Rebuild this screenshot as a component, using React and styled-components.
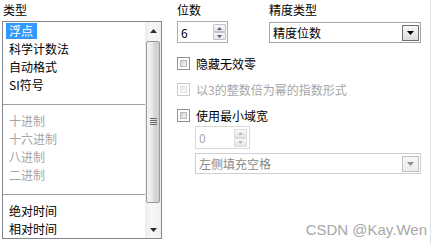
import React from 'react';
import styled, { createGlobalStyle } from 'styled-components';

const Global = createGlobalStyle`
  html, body { margin: 0; padding: 0; background: #fff; }
  body {
    font-family: "Noto Sans CJK SC", "Microsoft YaHei", sans-serif;
    font-size: 12px;
    color: #000;
  }
`;

const Page = styled.div`
  position: relative;
  width: 442px;
  height: 246px;
  display: flex;
  overflow: hidden;
  background: #fff;
`;

const LeftCol = styled.div`
  width: 160px;
  margin-left: 2px;
  display: flex;
  flex-direction: column;
`;

const Label = styled.div`
  height: 21px;
  box-sizing: border-box;
  padding-top: 3px;
  padding-left: ${p => p.$indent || 0}px;
  line-height: 14px;
  white-space: nowrap;
`;

const ListBox = styled.div`
  height: 218px;
  box-sizing: border-box;
  border: 1px solid #828790;
  display: flex;
`;

const List = styled.div`
  flex: 1;
  display: flex;
  flex-direction: column;
`;

const Row = styled.div`
  height: 18px;
  display: flex;
  align-items: center;
  padding-left: 3px;
`;

const Item = styled.span`
  line-height: 16px;
  height: 16px;
  padding: 0 4px 0 3px;
  white-space: nowrap;
  color: ${p => (p.$selected ? '#fff' : p.$disabled ? '#a6a6a6' : '#000')};
  background: ${p => (p.$selected ? '#3399ff' : 'transparent')};
`;

const SepRow = styled.div`
  height: 18px;
  box-sizing: border-box;
  padding-top: 3px;
  display: flex;
  align-items: center;
`;

const SepLine = styled.div`
  flex: 1;
  height: 1px;
  background: #a0a0a0;
`;

const ScrollBar = styled.div`
  width: 16px;
  display: flex;
  flex-direction: column;
  background: linear-gradient(to right, #ececec, #f7f7f7 40%, #f0f0f0);
`;

const ScrollBtn = styled.div`
  height: 17px;
  display: flex;
  align-items: center;
  justify-content: center;
`;

const Thumb = styled.div`
  margin: 2px 1px 0 1px;
  height: 162px;
  box-sizing: border-box;
  border: 1px solid #9a9a9a;
  border-radius: 2px;
  background: linear-gradient(to right, #f4f4f4 0%, #e9e9e9 45%, #d9d9d9 55%, #cfcfcf 100%);
  display: flex;
  align-items: center;
  justify-content: center;
`;

const Spacer = styled.div`
  flex: 1;
`;

const RightCol = styled.div`
  margin-left: 15px;
  width: 244px;
  display: flex;
  flex-direction: column;
`;

const TopGrid = styled.div`
  display: grid;
  grid-template-columns: 92px 152px;
  grid-template-rows: 21px 22px;
`;

const SpinBox = styled.div`
  width: ${p => p.$w}px;
  height: ${p => p.$h}px;
  box-sizing: border-box;
  border: 1px solid ${p => (p.$disabled ? '#d9d9d9' : '#abadb3')};
  display: flex;
  align-items: center;
  padding: 0 ${p => p.$pr}px 0 3px;
`;

const SpinValue = styled.span`
  flex: 1;
  color: ${p => (p.$disabled ? '#a3aabb' : '#000')};
`;

const SpinBtns = styled.div`
  width: 13px;
  height: ${p => p.$h}px;
  display: flex;
  flex-direction: column;
`;

const SpinBtn = styled.div`
  flex: 1;
  box-sizing: border-box;
  border: 1px solid ${p => (p.$disabled ? '#dcdcdc' : '#c0c3c8')};
  border-radius: 1px;
  background: linear-gradient(#fafafa, #e4e4e4);
  display: flex;
  align-items: center;
  justify-content: center;
`;

const Select = styled.div`
  width: ${p => p.$w}px;
  height: 21px;
  align-self: end;
  box-sizing: border-box;
  border: 1px solid ${p => (p.$disabled ? '#d0d0d0' : '#a5a5a5')};
  display: flex;
  align-items: center;
  padding: 0 1px 0 3px;
`;

const SelectText = styled.span`
  flex: 1;
  white-space: nowrap;
  color: ${p => (p.$disabled ? '#8a8a8a' : '#000')};
`;

const SelectBtn = styled.div`
  width: 17px;
  height: 16px;
  box-sizing: border-box;
  border: 1px solid ${p => (p.$disabled ? '#c2c2c2' : '#6f6f6f')};
  background: ${p =>
    p.$disabled ? 'linear-gradient(#f7f7f7, #ececec)' : 'linear-gradient(#f6f6f6, #dedede)'};
  display: flex;
  align-items: center;
  justify-content: center;
`;

const Checks = styled.div`
  margin-top: 12px;
  display: flex;
  flex-direction: column;
  gap: 10px;
`;

const CheckRow = styled.div`
  height: 16px;
  display: flex;
  align-items: center;
  gap: 6px;
  white-space: nowrap;
  color: ${p => (p.$disabled ? '#a6a6a6' : '#000')};
`;

const CheckBox = styled.span`
  position: relative;
  width: 13px;
  height: 13px;
  box-sizing: border-box;
  border: 1px solid ${p => (p.$disabled ? '#cacaca' : '#8e8f8f')};
  background: #fff;
  flex: none;
  &::after {
    content: '';
    position: absolute;
    inset: 2px;
    border: 1px solid ${p => (p.$disabled ? '#e2e2e2' : '#b9b9b9')};
    background: ${p =>
      p.$disabled
        ? 'linear-gradient(135deg, #ececec, #f8f8f8)'
        : 'linear-gradient(135deg, #d2d2d2, #f4f4f4)'};
  }
`;

const SubGroup = styled.div`
  margin-top: 3px;
  margin-left: 18px;
  display: flex;
  flex-direction: column;
  gap: 4px;
`;

const Divider = styled.div`
  margin-left: 9px;
  width: 1px;
  height: 244px;
  background: #dbe3ea;
`;

const Watermark = styled.div`
  position: absolute;
  right: 15px;
  top: 221px;
  font-family: "Liberation Sans", Arial, sans-serif;
  font-size: 15px;
  line-height: 17px;
  color: #a8a8a8;
  white-space: nowrap;
`;

const Tri = ({ dir = 'down', w = 7, h = 4, color = '#333' }) => (
  <svg width={w} height={h} viewBox={`0 0 ${w} ${h}`}>
    {dir === 'down' ? (
      <polygon points={`0,0 ${w},0 ${w / 2},${h}`} fill={color} />
    ) : (
      <polygon points={`0,${h} ${w},${h} ${w / 2},0`} fill={color} />
    )}
  </svg>
);

const Grip = () => (
  <svg width="7" height="8" viewBox="0 0 7 8">
    {[0, 2, 4, 6].map(y => (
      <rect key={y} x="0" y={y} width="7" height="1" fill="#6b6b6b" />
    ))}
  </svg>
);

const rows = [
  { t: '浮点', selected: true },
  { t: '科学计数法' },
  { t: '自动格式' },
  { t: 'SI符号' },
  { sep: true },
  { t: '十进制', disabled: true },
  { t: '十六进制', disabled: true },
  { t: '八进制', disabled: true },
  { t: '二进制', disabled: true },
  { sep: true },
  { t: '绝对时间' },
  { t: '相对时间' },
];

const Spin = ({ value, w, h, btnH, pr, disabled }) => (
  <SpinBox $w={w} $h={h} $pr={pr} $disabled={disabled}>
    <SpinValue $disabled={disabled}>{value}</SpinValue>
    <SpinBtns $h={btnH}>
      <SpinBtn $disabled={disabled}>
        <Tri dir="up" w={5} h={3} color={disabled ? '#b5bccb' : '#4d5f83'} />
      </SpinBtn>
      <SpinBtn $disabled={disabled}>
        <Tri dir="down" w={5} h={3} color={disabled ? '#b5bccb' : '#4d5f83'} />
      </SpinBtn>
    </SpinBtns>
  </SpinBox>
);

const Dropdown = ({ text, w, disabled }) => (
  <Select $w={w} $disabled={disabled}>
    <SelectText $disabled={disabled}>{text}</SelectText>
    <SelectBtn $disabled={disabled}>
      <Tri dir="down" w={7} h={4} color={disabled ? '#8f8f8f' : '#000'} />
    </SelectBtn>
  </Select>
);

export default function App() {
  return (
    <>
      <Global />
      <Page>
        <LeftCol>
          <Label $indent={1}>类型</Label>
          <ListBox>
            <List>
              {rows.map((r, i) =>
                r.sep ? (
                  <SepRow key={i}>
                    <SepLine />
                  </SepRow>
                ) : (
                  <Row key={i}>
                    <Item $selected={r.selected} $disabled={r.disabled}>
                      {r.t}
                    </Item>
                  </Row>
                )
              )}
            </List>
            <ScrollBar>
              <ScrollBtn>
                <Tri dir="up" w={7} h={4} color="#2b2b2b" />
              </ScrollBtn>
              <Thumb>
                <Grip />
              </Thumb>
              <Spacer />
              <ScrollBtn>
                <Tri dir="down" w={7} h={4} color="#2b2b2b" />
              </ScrollBtn>
            </ScrollBar>
          </ListBox>
        </LeftCol>

        <RightCol>
          <TopGrid>
            <Label>位数</Label>
            <Label>精度类型</Label>
            <Spin value="6" w={51} h={22} btnH={16} pr={1} />
            <Dropdown text="精度位数" w={152} />
          </TopGrid>

          <Checks>
            <CheckRow>
              <CheckBox />
              隐藏无效零
            </CheckRow>
            <CheckRow $disabled>
              <CheckBox $disabled />
              以3的整数倍为幂的指数形式
            </CheckRow>
            <CheckRow>
              <CheckBox />
              使用最小域宽
            </CheckRow>
          </Checks>

          <SubGroup>
            <Spin value="0" w={55} h={23} btnH={18} pr={2} disabled />
            <Dropdown text="左侧填充空格" w={226} disabled />
          </SubGroup>
        </RightCol>

        <Divider />
        <Watermark>CSDN @Kay.Wen</Watermark>
      </Page>
    </>
  );
}
